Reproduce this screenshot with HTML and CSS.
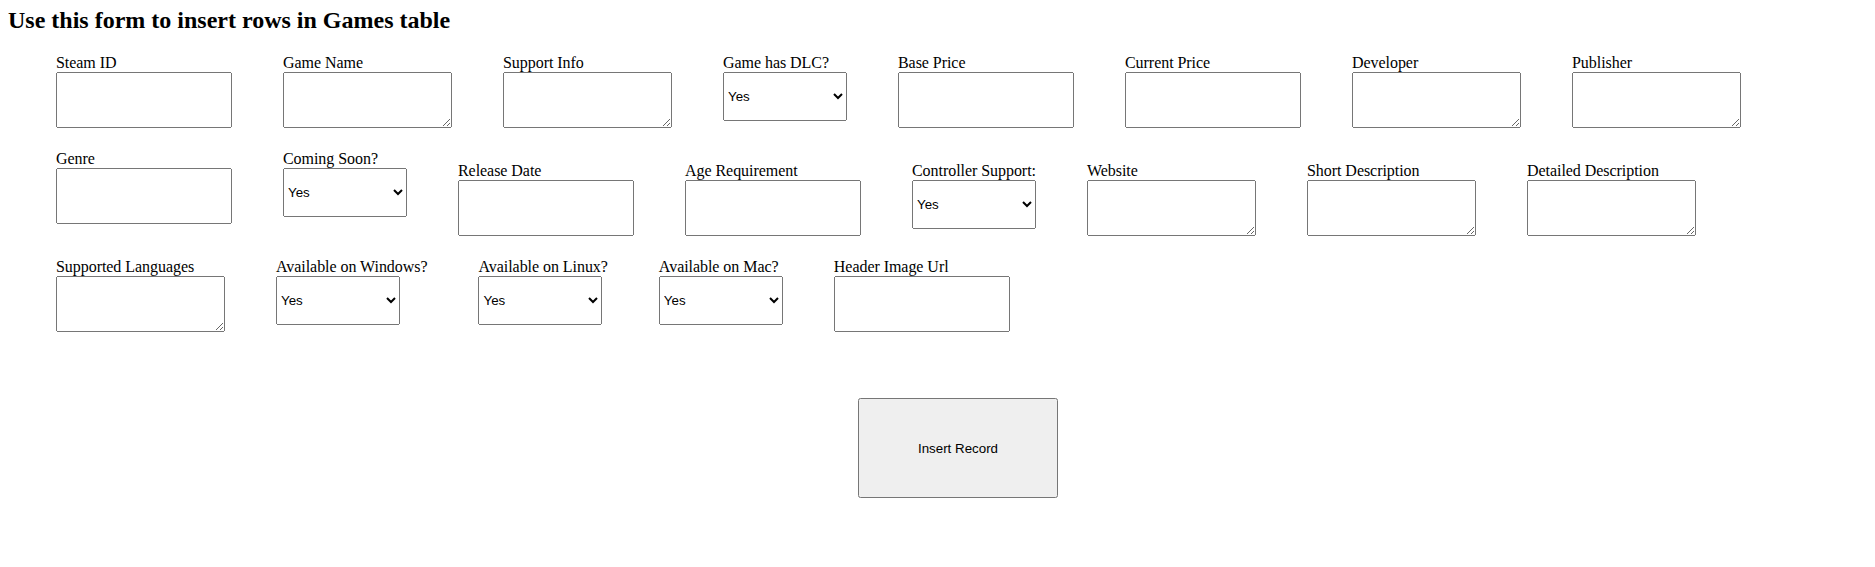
FILE: index.html
```html
<!DOCTYPE html>
<html lang="en">
<head>
    <meta charset="UTF-8">
    <meta name="viewport" content="width=device-width, initial-scale=1.0">
    <title>Insert Game</title>
    <link rel="stylesheet" href="styles.css">
</head>
<body>
    <h2>Use this form to insert rows in Games table</h2>
    <form class="game-form" method="post" action="#">
        <div class="row">
            <div class="field"><label for="steam_id">Steam ID</label><input class="text" type="text" id="steam_id" name="steam_id"></div>
            <div class="field"><label for="name">Game Name</label><textarea class="area" id="name" name="name"></textarea></div>
            <div class="field"><label for="support_info">Support Info</label><textarea class="area" id="support_info" name="support_info"></textarea></div>
            <div class="field"><label for="dlc">Game has DLC?</label>
                <select class="pick" id="dlc" name="dlc"><option>Yes</option><option>No</option></select></div>
            <div class="field"><label for="base_price">Base Price</label><input class="text" type="text" id="base_price" name="base_price"></div>
            <div class="field"><label for="current_price">Current Price</label><input class="text" type="text" id="current_price" name="current_price"></div>
            <div class="field"><label for="developer">Developer</label><textarea class="area" id="developer" name="developer"></textarea></div>
            <div class="field"><label for="publisher">Publisher</label><textarea class="area" id="publisher" name="publisher"></textarea></div>
        </div>
        <div class="row">
            <div class="field"><label for="genre">Genre</label><input class="text" type="text" id="genre" name="genre"></div>
            <div class="field"><label for="coming_soon">Coming Soon?</label>
                <select class="pick" id="coming_soon" name="coming_soon"><option>Yes</option><option>No</option></select></div>
            <div class="field drop"><label for="release_date">Release Date</label><input class="text" type="text" id="release_date" name="release_date"></div>
            <div class="field drop"><label for="age">Age Requirement</label><input class="text" type="text" id="age" name="age"></div>
            <div class="field drop"><label for="controller">Controller Support:</label>
                <select class="pick" id="controller" name="controller"><option>Yes</option><option>No</option></select></div>
            <div class="field drop"><label for="website">Website</label><textarea class="area" id="website" name="website"></textarea></div>
            <div class="field drop"><label for="short_desc">Short Description</label><textarea class="area" id="short_desc" name="short_desc"></textarea></div>
            <div class="field drop"><label for="detailed_desc">Detailed Description</label><textarea class="area" id="detailed_desc" name="detailed_desc"></textarea></div>
        </div>
        <div class="row">
            <div class="field"><label for="languages">Supported Languages</label><textarea class="area" id="languages" name="languages"></textarea></div>
            <div class="field"><label for="windows">Available on Windows?</label>
                <select class="pick" id="windows" name="windows"><option>Yes</option><option>No</option></select></div>
            <div class="field"><label for="linux">Available on Linux?</label>
                <select class="pick" id="linux" name="linux"><option>Yes</option><option>No</option></select></div>
            <div class="field"><label for="mac">Available on Mac?</label>
                <select class="pick" id="mac" name="mac"><option>Yes</option><option>No</option></select></div>
            <div class="field"><label for="header_image">Header Image Url</label><input class="text" type="text" id="header_image" name="header_image"></div>
        </div>
        <div class="actions">
            <button class="submit" type="submit" name="insert">Insert Record</button>
        </div>
    </form>
</body>
</html>
```

FILE: styles.css
```css
body {
    margin: 6px 8px 8px;
    font-family: "Liberation Serif", "Times New Roman", serif;
    font-size: 16px;
    color: #000;
    background: #fff;
}
h2 {
    margin: 0 0 20px;
    font-size: 24px;
    line-height: 28px;
    font-weight: bold;
}
.game-form {
    display: flex;
    flex-direction: column;
    gap: 22px;
    padding: 0 7px 0 48px;
}
.row {
    display: flex;
    align-items: flex-start;
    gap: 51px;
}
.field {
    display: flex;
    flex-direction: column;
    align-items: flex-start;
}
.drop {
    margin-top: 12px;
}
label {
    display: block;
    line-height: 18px;
    letter-spacing: -0.05px;
}
.text,
.area,
.pick,
.submit {
    margin: 0;
    font-family: "Liberation Sans", Arial, sans-serif;
    font-size: 13.33px;
}
.text {
    box-sizing: border-box;
    width: 176px;
    height: 56px;
}
.area {
    box-sizing: border-box;
    width: 169px;
    height: 56px;
}
.pick {
    box-sizing: border-box;
    width: 124px;
    height: 49px;
}
.actions {
    display: flex;
    justify-content: center;
    margin-top: 44px;
}
.submit {
    width: 200px;
    height: 100px;
}
```
